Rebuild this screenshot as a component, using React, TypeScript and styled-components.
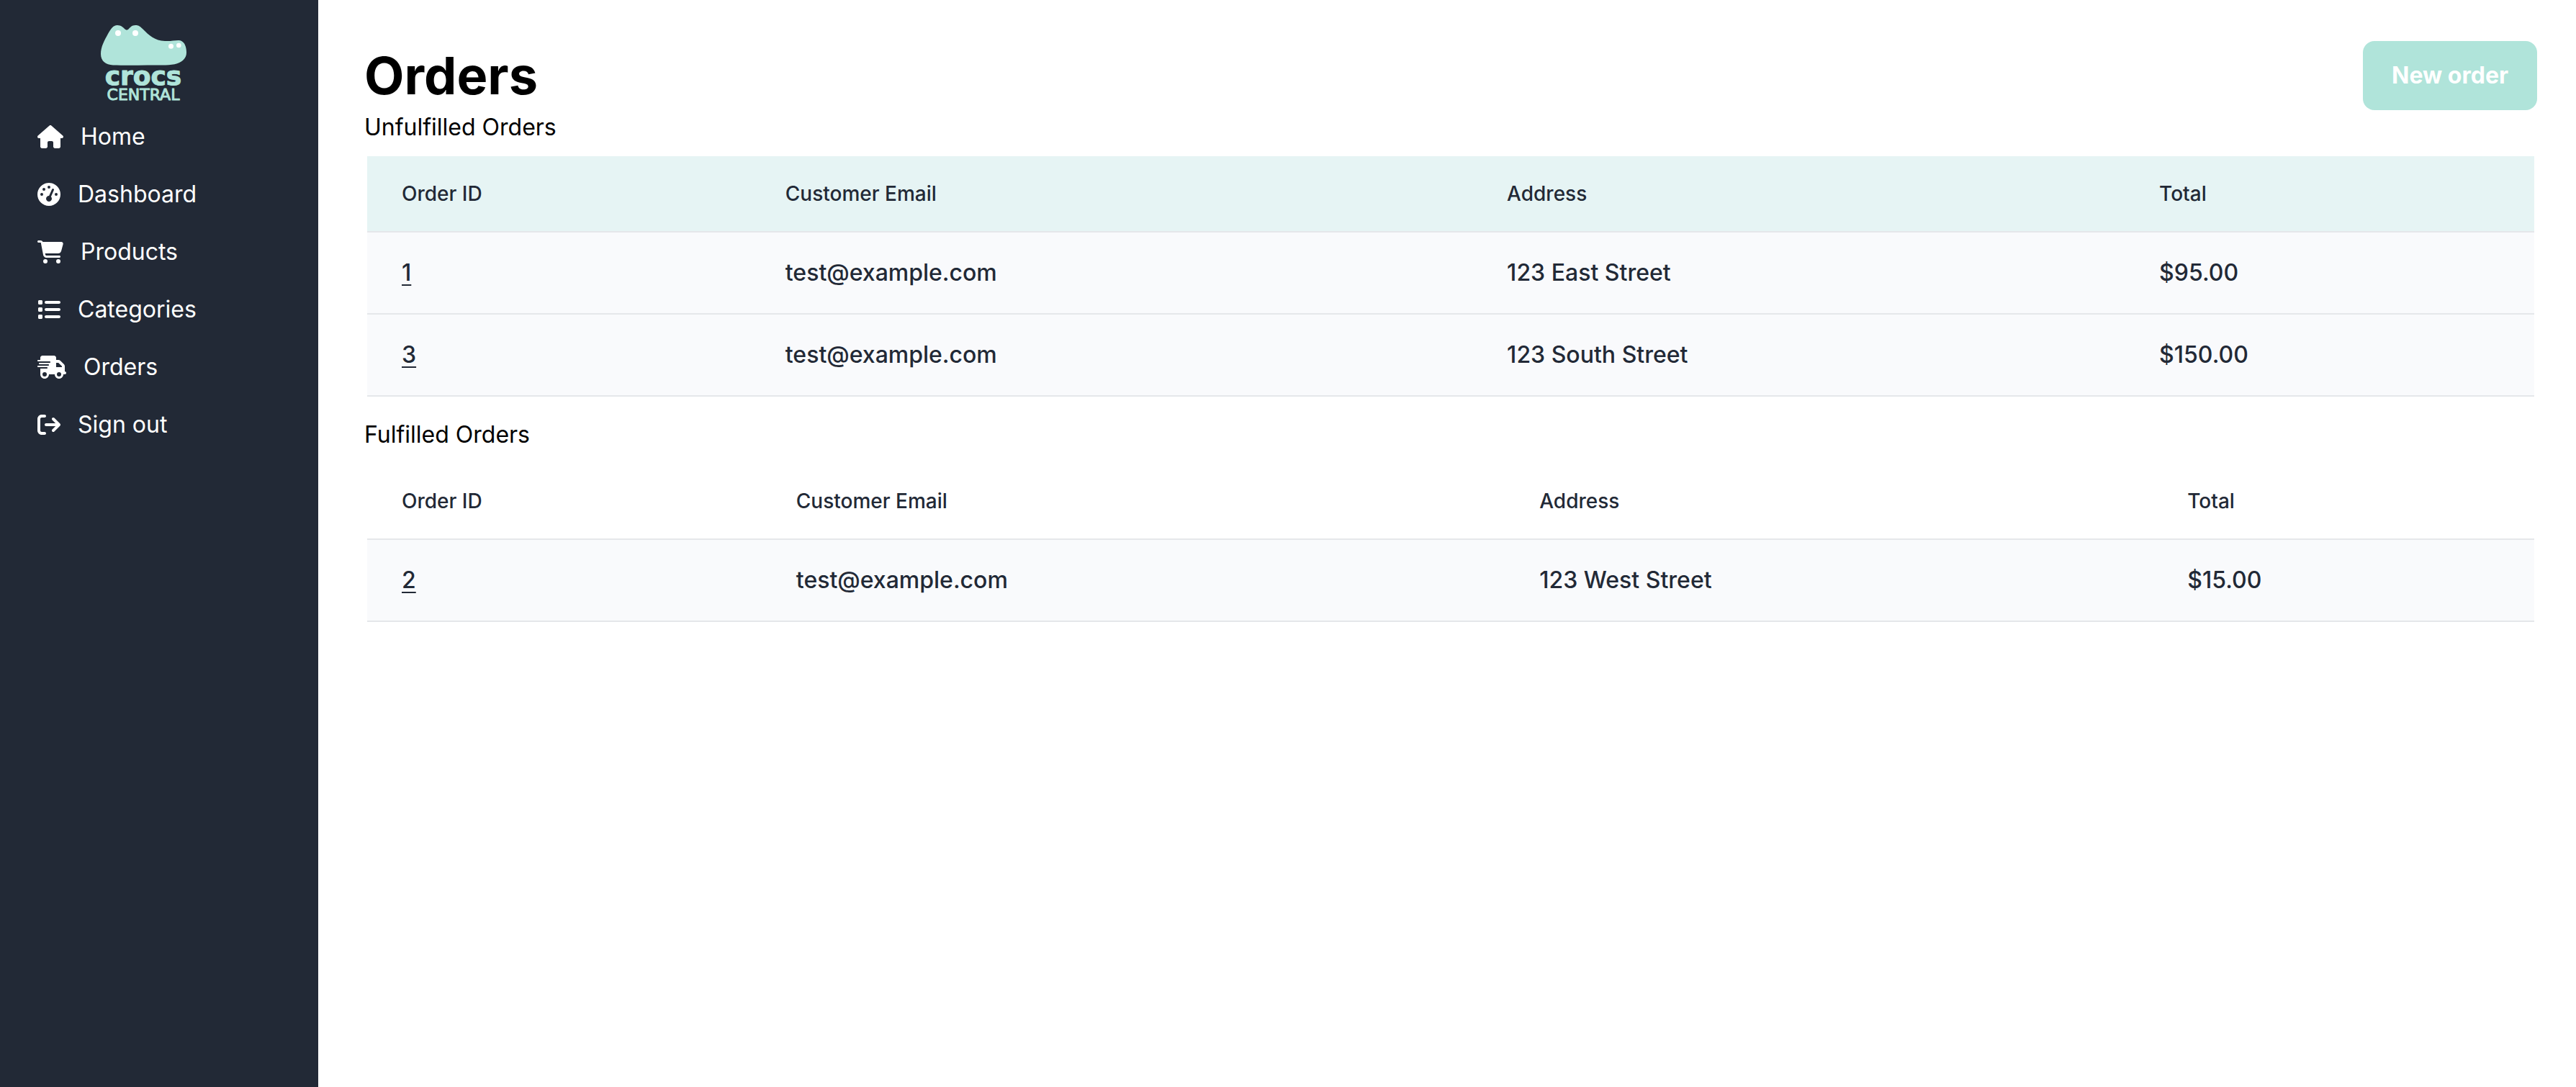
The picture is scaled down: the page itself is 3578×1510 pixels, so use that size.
import React from "react";
import styled, { createGlobalStyle } from "styled-components";
import {
  FaArrowRightFromBracket,
  FaCartShopping,
  FaGaugeHigh,
  FaHouse,
  FaList,
  FaTruckFast,
} from "react-icons/fa6";
import type { IconType } from "react-icons";

const GlobalStyle = createGlobalStyle`
  *, *::before, *::after { box-sizing: border-box; }
  body {
    margin: 0;
    background: #fff;
    color: #000;
    font-family: Inter, "Liberation Sans", sans-serif;
    font-size: 32px;
    line-height: 48px;
  }
`;

const Layout = styled.div`
  display: flex;
  min-height: 100vh;
`;

const Sidebar = styled.aside`
  flex: 0 0 442px;
  background: #222936;
  color: #fff;
`;

const Brand = styled.a`
  display: block;
  padding: 32px 0 0 138px;
  line-height: 0;
`;

const NavLink = styled.a`
  display: flex;
  align-items: center;
  gap: 24px;
  padding: 16px 52px;
  color: inherit;
  text-decoration: none;
`;

const NavIcon = styled.span<{ $width: number }>`
  display: flex;

  svg {
    width: ${(p) => p.$width}px;
    height: 32px;
  }
`;

const Main = styled.main`
  flex: 1;
  min-width: 0;
  padding: 57px 54px 57px 64px;
`;

const Header = styled.header`
  display: flex;
  align-items: center;
  justify-content: space-between;
`;

const Title = styled.h1`
  margin: 0;
  font-size: 72px;
  line-height: 80px;
  font-weight: 700;
`;

const NewOrderButton = styled.button`
  padding: 24px 40px;
  border: 0;
  border-radius: 16px;
  background: #b0e4da;
  color: #fff;
  font: inherit;
  font-weight: 700;
  cursor: pointer;
`;

const Section = styled.section`
  padding-bottom: 29px;
`;

const SectionTitle = styled.h2`
  margin: 0 0 16px;
  font: inherit;
`;

const TableFrame = styled.div`
  padding: 0 4px;
`;

const Table = styled.table`
  width: 100%;
  table-layout: fixed;
  border-spacing: 0;
  color: #222936;
  font-weight: 500;
  text-align: left;
`;

const Column = styled.col<{ $share: number }>`
  width: ${(p) => p.$share}%;
`;

const HeadCell = styled.th<{ $tinted: boolean }>`
  padding: 32px 48px;
  border-bottom: 2px solid #e5e7ea;
  background: ${(p) => (p.$tinted ? "#e6f4f4" : "transparent")};
  font-size: 28px;
  line-height: 40px;
  font-weight: 500;
`;

const Cell = styled.td`
  padding: 32px 48px;
  border-bottom: 2px solid #e5e7ea;
  background: #f9fafc;
`;

const OrderLink = styled.a`
  color: inherit;
  text-decoration: underline;
  text-decoration-thickness: 2px;
  text-underline-offset: 5px;
`;

function Logo() {
  return (
    <svg width="124" height="118" viewBox="138 32 124 118" role="img" aria-label="Crocs Central">
      <path
        fill="#b0e4da"
        d="M163 35C157 35 154 40 150 47C145 56 140 65 140 75C140 85 147 90 157 90.500C177 91 206 90.500 230 90.500C248 90.500 259 84 259 73C259 63 255 56 248 56C241 56 237 57.500 229 57C215 56.500 207 49 198 40C194 36 192 35 188 35C183 35 181 38 178.500 40.500C177 42 175 42 173.500 40.500C171 38 168 35 163 35Z"
      />
      <g fill="#fff">
        <circle cx="164" cy="46" r="4" />
        <circle cx="188" cy="46" r="4" />
        <circle cx="237.500" cy="64.300" r="3.500" />
        <circle cx="248.300" cy="63" r="3.300" />
      </g>
      <g
        fill="#b0e4da"
        stroke="#b0e4da"
        strokeWidth="1"
        strokeLinejoin="round"
        textAnchor="middle"
        fontFamily="'DejaVu Sans', sans-serif"
      >
        <text x="199" y="118" fontSize="36" fontWeight="700">
          crocs
        </text>
        <text x="199" y="139" fontSize="22" fontWeight="400">
          CENTRAL
        </text>
      </g>
    </svg>
  );
}

const navItems: { label: string; icon: IconType; width: number }[] = [
  { label: "Home", icon: FaHouse, width: 36 },
  { label: "Dashboard", icon: FaGaugeHigh, width: 32 },
  { label: "Products", icon: FaCartShopping, width: 36 },
  { label: "Categories", icon: FaList, width: 32 },
  { label: "Orders", icon: FaTruckFast, width: 40 },
  { label: "Sign out", icon: FaArrowRightFromBracket, width: 32 },
];

type Order = { id: number; email: string; address: string; total: string };

const unfulfilled: Order[] = [
  { id: 1, email: "test@example.com", address: "123 East Street", total: "$95.00" },
  { id: 3, email: "test@example.com", address: "123 South Street", total: "$150.00" },
];

const fulfilled: Order[] = [
  { id: 2, email: "test@example.com", address: "123 West Street", total: "$15.00" },
];

const columns = ["Order ID", "Customer Email", "Address", "Total"];

type OrdersTableProps = {
  title: string;
  orders: Order[];
  shares: number[];
  tinted?: boolean;
};

function OrdersTable({ title, orders, shares, tinted = false }: OrdersTableProps) {
  return (
    <Section>
      <SectionTitle>{title}</SectionTitle>
      <TableFrame>
        <Table aria-label={title}>
          <colgroup>
            {shares.map((share, i) => (
              <Column key={columns[i]} $share={share} />
            ))}
          </colgroup>
          <thead>
            <tr>
              {columns.map((column) => (
                <HeadCell key={column} scope="col" $tinted={tinted}>
                  {column}
                </HeadCell>
              ))}
            </tr>
          </thead>
          <tbody>
            {orders.map((order) => (
              <tr key={order.id}>
                <Cell>
                  <OrderLink href={`#order-${order.id}`}>{order.id}</OrderLink>
                </Cell>
                <Cell>{order.email}</Cell>
                <Cell>{order.address}</Cell>
                <Cell>{order.total}</Cell>
              </tr>
            ))}
          </tbody>
        </Table>
      </TableFrame>
    </Section>
  );
}

export default function App() {
  return (
    <>
      <GlobalStyle />
      <Layout>
        <Sidebar>
          <Brand href="#home">
            <Logo />
          </Brand>
          <nav>
            {navItems.map(({ label, icon: Icon, width }) => (
              <NavLink key={label} href={`#${label.toLowerCase().replace(" ", "-")}`}>
                <NavIcon $width={width}>
                  <Icon aria-hidden />
                </NavIcon>
                {label}
              </NavLink>
            ))}
          </nav>
        </Sidebar>
        <Main>
          <Header>
            <Title>Orders</Title>
            <NewOrderButton type="button">New order</NewOrderButton>
          </Header>
          <OrdersTable
            title="Unfulfilled Orders"
            orders={unfulfilled}
            shares={[17.7, 33.3, 30.1, 18.9]}
            tinted
          />
          <OrdersTable title="Fulfilled Orders" orders={fulfilled} shares={[18.2, 34.3, 29.9, 17.6]} />
        </Main>
      </Layout>
    </>
  );
}
